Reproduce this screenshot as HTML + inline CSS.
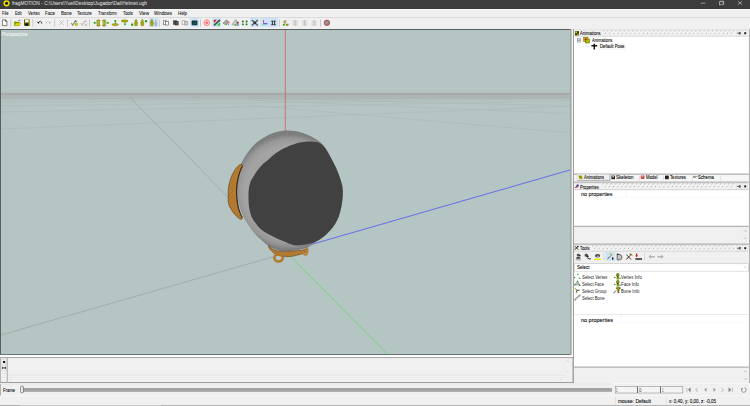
<!DOCTYPE html>
<html><head><meta charset="utf-8"><style>
*{margin:0;padding:0;box-sizing:border-box}
html,body{width:750px;height:406px;overflow:hidden;background:#f0f0f0;font-family:"Liberation Sans",sans-serif;position:relative}
.a{position:absolute}
.t{position:absolute;white-space:nowrap;transform-origin:0 0;-webkit-text-stroke:0.08px currentColor}
svg{position:absolute;overflow:visible}
</style></head><body>
<div class="a" style="left:0px;top:0px;width:750px;height:8.8px;background:#3c3c3c;"></div>
<svg style="left:0;top:0" width="20" height="8"><circle cx="6.55" cy="3.3" r="3.1" fill="#f0e000"/><circle cx="6.55" cy="3.2" r="1.55" fill="#111"/></svg>
<div class="t" style="left:12.00px;top:1.10px;font-size:5.0px;line-height:5.0px;color:#d6d6d6;transform:scaleX(0.974);">fragMOTION - C:\Users\Yuei\Desktop\Jugador\Dai\Helmet.ugh</div>
<svg style="left:0;top:0" width="750" height="9"><line x1="700.8" y1="3.2" x2="705.2" y2="3.2" stroke="#d4d4d4" stroke-width="0.6"/><rect x="719.4" y="1.8" width="3.8" height="3" fill="none" stroke="#d4d4d4" stroke-width="0.6"/><path d="M720.2,1.2 h3.6 v2.8" fill="none" stroke="#d4d4d4" stroke-width="0.5"/><path d="M737.8,1.2 L742.2,4.8 M742.2,1.2 L737.8,4.8" stroke="#d4d4d4" stroke-width="0.6"/></svg>
<div class="a" style="left:0px;top:8.8px;width:750px;height:8.2px;background:#f0f0f0;"></div>
<div class="a" style="left:0px;top:8.8px;width:750px;height:1.4px;background:#f8f8f8;"></div>
<div class="t" style="left:2.00px;top:11.34px;font-size:5.4px;line-height:5.4px;color:#1a1a1a;transform:scaleX(0.747);">File</div>
<div class="t" style="left:14.70px;top:11.34px;font-size:5.4px;line-height:5.4px;color:#1a1a1a;transform:scaleX(0.709);">Edit</div>
<div class="t" style="left:27.50px;top:11.34px;font-size:5.4px;line-height:5.4px;color:#1a1a1a;transform:scaleX(0.784);">Vertex</div>
<div class="t" style="left:45.30px;top:11.34px;font-size:5.4px;line-height:5.4px;color:#1a1a1a;transform:scaleX(0.825);">Face</div>
<div class="t" style="left:60.80px;top:11.34px;font-size:5.4px;line-height:5.4px;color:#1a1a1a;transform:scaleX(0.848);">Bone</div>
<div class="t" style="left:77.30px;top:11.34px;font-size:5.4px;line-height:5.4px;color:#1a1a1a;transform:scaleX(0.830);">Texture</div>
<div class="t" style="left:98.00px;top:11.34px;font-size:5.4px;line-height:5.4px;color:#1a1a1a;transform:scaleX(0.770);">Transform</div>
<div class="t" style="left:123.00px;top:11.34px;font-size:5.4px;line-height:5.4px;color:#1a1a1a;transform:scaleX(0.793);">Tools</div>
<div class="t" style="left:139.00px;top:11.34px;font-size:5.4px;line-height:5.4px;color:#1a1a1a;transform:scaleX(0.862);">View</div>
<div class="t" style="left:154.00px;top:11.34px;font-size:5.4px;line-height:5.4px;color:#1a1a1a;transform:scaleX(0.822);">Windows</div>
<div class="t" style="left:178.00px;top:11.34px;font-size:5.4px;line-height:5.4px;color:#1a1a1a;transform:scaleX(0.810);">Help</div>
<div class="a" style="left:0px;top:17px;width:750px;height:12px;background:#f0f0f0;"></div>
<div class="a" style="left:0px;top:17px;width:750px;height:0.9px;background:#dadada;"></div>
<div class="a" style="left:148.8px;top:18.2px;width:9.3px;height:8.4px;background:#cce4f7;"></div>
<div class="a" style="left:190px;top:18.2px;width:9.3px;height:8.4px;background:#cce4f7;"></div>
<div class="a" style="left:212.2px;top:18.2px;width:9.3px;height:8.4px;background:#cce4f7;"></div>
<div class="a" style="left:250px;top:18.2px;width:9.3px;height:8.4px;background:#cce4f7;"></div>
<div class="a" style="left:259.8px;top:18.2px;width:8.2px;height:8.4px;background:#cce4f7;"></div>
<div class="a" style="left:268.3px;top:18.2px;width:9.6px;height:8.4px;background:#cce4f7;"></div>
<svg style="left:0;top:0" width="750" height="30"><rect x="10.4" y="19.4" width="0.9" height="7.2" fill="#c4c4c4"/><rect x="32.300000000000004" y="19.4" width="0.9" height="7.2" fill="#c4c4c4"/><rect x="54.2" y="19.4" width="0.9" height="7.2" fill="#c4c4c4"/><rect x="67.1" y="19.4" width="0.9" height="7.2" fill="#c4c4c4"/><rect x="89.0" y="19.4" width="0.9" height="7.2" fill="#c4c4c4"/><rect x="158.9" y="19.4" width="0.9" height="7.2" fill="#c4c4c4"/><rect x="200.1" y="19.4" width="0.9" height="7.2" fill="#c4c4c4"/><rect x="279.0" y="19.4" width="0.9" height="7.2" fill="#c4c4c4"/><rect x="320.0" y="19.4" width="0.9" height="7.2" fill="#c4c4c4"/><path d="M2.4,19.8 h3 l1.5,1.5 v4.3 h-4.5z" fill="#fff" stroke="#333" stroke-width="0.6"/><path d="M5.4,19.8 v1.5 h1.5" fill="#333" stroke="#333" stroke-width="0.5"/><path d="M14.2,21.5 h2 l0.6,0.6 h2.5 v3.4 h-5.1z" fill="#8a8a00"/><path d="M14.4,25.6 l1.3,-2.6 h5 l-1.3,2.6z" fill="#e0e000" stroke="#666600" stroke-width="0.3"/><path d="M18.2,21 q1.2,-1.2 2.2,0" fill="none" stroke="#222" stroke-width="0.6"/><rect x="24" y="19.5" width="5.7" height="6.3" fill="#5a5a10"/><rect x="25" y="19.8" width="3.7" height="2.6" fill="#f4f4f4"/><rect x="25.2" y="23.5" width="3.4" height="2.2" fill="#111"/><rect x="28.4" y="19.5" width="1.3" height="6.3" fill="#c8c800" opacity="0.6"/><path d="M36.9,21.8 l2.3,0.2 l-0.2,2 z" fill="#111"/><path d="M38.6,22.4 q0.8,-1.2 2,-1 q1.1,0.3 1.2,2.2" fill="none" stroke="#222" stroke-width="0.9"/><path d="M51.2,22 l-2.2,0.3 l0.4,2 z" fill="#b0b0b0"/><path d="M49.4,22.4 q-0.8,-1.2 -2,-1 q-1.1,0.3 -1.1,2.2" fill="none" stroke="#c4c4c4" stroke-width="0.8"/><path d="M59.3,20.2 l4.4,4.8 M63.7,20.2 l-4.4,4.8" stroke="#b8b8b8" stroke-width="0.8"/><path d="M71.2,23 l1.5,2.2 l2.4,-4.2" fill="none" stroke="#8a8a8a" stroke-width="1.1"/><circle cx="75.8" cy="21.2" r="0.9" fill="#555"/><rect x="75" y="23" width="2.6" height="2.6" fill="#d4d400" stroke="#707000" stroke-width="0.3"/><path d="M80.8,23 l1.5,2.2 l2.4,-4.2" fill="none" stroke="#c4c4c4" stroke-width="1.2"/><circle cx="85.4" cy="21.2" r="0.9" fill="#b4b4b4"/><path d="M84.6,23.6 l2.4,2.4 M87,23.6 l-2.4,2.4" stroke="#b0b0b0" stroke-width="0.8"/><path d="M96.7,20.4 q1.6,-1.2 3.2,0 l-0.6,1.4 v2.4 l0.6,1.4 q-1.6,1.2 -3.2,0 l0.6,-1.4 v-2.4z" fill="#b0b000" stroke="#4a4a00" stroke-width="0.5"/><path d="M98.0,20.6 v4.6" stroke="#e8e840" stroke-width="0.6"/><path d="M93.3,22.8 l1.8,-1.4 v2.8z" fill="#10a010"/><rect x="94.8" y="22.4" width="2" height="0.9" fill="#10a010"/><path d="M102.5,20.4 q1.6,-1.2 3.2,0 l-0.6,1.4 v2.4 l0.6,1.4 q-1.6,1.2 -3.2,0 l0.6,-1.4 v-2.4z" fill="#b0b000" stroke="#4a4a00" stroke-width="0.5"/><path d="M103.8,20.6 v4.6" stroke="#e8e840" stroke-width="0.6"/><path d="M109.3,22.8 l-1.8,-1.4 v2.8z" fill="#10a010"/><rect x="105.8" y="22.4" width="2" height="0.9" fill="#10a010"/><ellipse cx="115.2" cy="24.6" rx="3.3" ry="1.1" fill="#b0b000" stroke="#4a4a00" stroke-width="0.3"/><circle cx="115.3" cy="21" r="1.1" fill="#10a010"/><rect x="115" y="21.8" width="0.6" height="2" fill="#10a010"/><ellipse cx="124.6" cy="21" rx="3.4" ry="1.2" fill="#b0b000" stroke="#4a4a00" stroke-width="0.3"/><path d="M125,25.8 l-1.2,-2 h2.4z" fill="#10a010"/><rect x="124.7" y="22" width="0.6" height="2" fill="#10a010"/><rect x="131.1" y="23.6" width="2.1" height="2.1" fill="#10a010"/><ellipse cx="136" cy="20.700000000000003" rx="1.088" ry="1.1" fill="#b0b000" stroke="#4a4a00" stroke-width="0.3"/><path d="M134.3,22.0 h3.4 l-0.5,3.6999999999999997 h-2.4 z" fill="#b0b000" stroke="#4a4a00" stroke-width="0.3"/><ellipse cx="142.3" cy="20.700000000000003" rx="1.088" ry="1.1" fill="#b0b000" stroke="#4a4a00" stroke-width="0.3"/><path d="M140.60000000000002,22.0 h3.4 l-0.5,3.6999999999999997 h-2.4 z" fill="#b0b000" stroke="#4a4a00" stroke-width="0.3"/><rect x="144.9" y="20.3" width="2.3" height="1.9" fill="#10a010"/><ellipse cx="151.8" cy="20.700000000000003" rx="1.088" ry="1.1" fill="#b0b000" stroke="#4a4a00" stroke-width="0.3"/><path d="M150.10000000000002,22.0 h3.4 l-0.5,3.6999999999999997 h-2.4 z" fill="#b0b000" stroke="#4a4a00" stroke-width="0.3"/><path d="M155.8,19.8 v3 M155,22.8 h1.8 v2.6 h-1.8z" fill="none" stroke="#7a8a9a" stroke-width="0.6"/><rect x="163.4" y="20.8" width="3.2" height="3.6" fill="#fff" stroke="#555" stroke-width="0.6"/><rect x="165.4" y="21.6" width="3" height="3.4" fill="#fff" stroke="#555" stroke-width="0.6"/><rect x="173.6" y="20.8" width="3.2" height="3.6" fill="#444" stroke="#333" stroke-width="0.6"/><rect x="175.4" y="21.6" width="2.8" height="3.4" fill="#555" stroke="#333" stroke-width="0.6"/><rect x="182" y="20.8" width="3.2" height="3.6" fill="#eee" stroke="#999" stroke-width="0.6"/><rect x="184.6" y="21.6" width="3.2" height="3.4" fill="#ccc" stroke="#999" stroke-width="0.6"/><rect x="191.9" y="20.7" width="5.3" height="4.4" rx="0.5" fill="#153850" stroke="#222" stroke-width="0.4"/><path d="M192.8,24.6 l1.5,-1.5 M194.8,24.2 l1.6,-2.2" stroke="#10a040" stroke-width="0.6"/><circle cx="206.8" cy="22.7" r="2.9" fill="none" stroke="#ff6a6a" stroke-width="0.8"/><circle cx="206.8" cy="22.7" r="1.3" fill="#ff5050"/><path d="M206.8,19.4 v6.6 M203.5,22.7 h6.6" stroke="#ff8080" stroke-width="0.5"/><path d="M213.8,19.8 h3.2 l-3.2,3.2z" fill="#e01010"/><path d="M220,25.4 h-3.2 l3.2,-3.2z" fill="#10d020"/><path d="M214,25.4 l6,-5.6" stroke="#3a3a3a" stroke-width="1.8"/><path d="M214,25.4 l6,-5.6" stroke="#ddd" stroke-width="0.5" stroke-dasharray="0.7 0.7"/><path d="M222.8,23.2 l3.5,-3.4 l2.2,1.5 l-3,3.5z" fill="#aaa" stroke="#555" stroke-width="0.4"/><rect x="227.4" y="21.8" width="2.2" height="1.5" fill="#f06060"/><rect x="225.6" y="23.6" width="1.6" height="1.6" fill="#40d040"/><path d="M227.4,23.6 l1.6,1.6" stroke="#2020e0" stroke-width="0.7"/><path d="M231.8,24.8 l3.2,-4.8 l1.8,0 l0,4.8z" fill="#ccc" stroke="#666" stroke-width="0.4"/><rect x="237" y="21.8" width="1.6" height="1.8" fill="#702020"/><circle cx="235.5" cy="25.3" r="0.8" fill="#10b010"/><rect x="237" y="24.6" width="2" height="0.8" fill="#202080"/><circle cx="242.9" cy="21.5" r="0.9" fill="#109010" stroke="#355" stroke-width="0.2"/><circle cx="242.9" cy="24.3" r="0.9" fill="#109010" stroke="#355" stroke-width="0.2"/><circle cx="246.6" cy="21.5" r="0.9" fill="#109010" stroke="#355" stroke-width="0.2"/><circle cx="246.6" cy="24.3" r="0.9" fill="#109010" stroke="#355" stroke-width="0.2"/><path d="M251.8,20 l6,5.6 M257.8,20 l-6,5.6" stroke="#555" stroke-width="1.3"/><circle cx="254.8" cy="22.8" r="1.4" fill="#333"/><path d="M263.6,20 v3.8" stroke="#f03030" stroke-width="0.9"/><path d="M263.6,23.8 h3.8" stroke="#2020f0" stroke-width="0.9"/><path d="M263.6,23.8 l-1.6,1.6" stroke="#20e020" stroke-width="0.9"/><path d="M271,21.2 h5 M271,24.6 h5" stroke="#444" stroke-width="0.8"/><path d="M272.4,20.8 v4.4 M274.6,20.8 v4.4" stroke="#333" stroke-width="1"/><path d="M283.5,22 l1.6,-1.8 v3.6z" fill="#b0b000" stroke="#4a4a00" stroke-width="0.3"/><rect x="285.6" y="20" width="0.6" height="2.6" fill="#888"/><circle cx="283.8" cy="24.8" r="1" fill="#10a010"/><path d="M286,24 h2.6 l-0.8,1.6 h-1.8z" fill="#b0b000" stroke="#4a4a00" stroke-width="0.3"/><path d="M292.4,21.2 h5.4 M292.4,23 h5.4 M292.4,24.8 h5.4" stroke="#c0c0c0" stroke-width="0.7"/><path d="M295,20 v6" stroke="#b0b0b0" stroke-width="0.7"/><path d="M302.0,21.2 h5.4 M302.0,23 h5.4 M302.0,24.8 h5.4" stroke="#c0c0c0" stroke-width="0.7"/><path d="M304.6,20 v6" stroke="#b0b0b0" stroke-width="0.7"/><path d="M311.59999999999997,21.2 h5.4 M311.59999999999997,23 h5.4 M311.59999999999997,24.8 h5.4" stroke="#c0c0c0" stroke-width="0.7"/><path d="M314.2,20 v6" stroke="#b0b0b0" stroke-width="0.7"/><circle cx="326.9" cy="22.8" r="2.7" fill="#8a8a8a" stroke="#c03030" stroke-width="0.8"/><path d="M325.6,24 l2.6,-2.6" stroke="#ccc" stroke-width="0.5"/></svg>
<div class="a" style="left:0px;top:29px;width:571px;height:326px;background:#b5c5c4;"></div>
<svg style="left:0;top:0" width="572" height="356"><rect x="1" y="92.8" width="570" height="2.8" fill="#a7a9a9"/><rect x="1" y="95.6" width="570" height="1.8" fill="#aeb3b3"/><rect x="1" y="97.8" width="570" height="0.7" fill="#a2acac"/><line x1="1" y1="100.2" x2="571" y2="96.71" stroke="#a9b4b3" stroke-width="0.5"/><line x1="1" y1="102.4" x2="571" y2="97.43" stroke="#a9b4b3" stroke-width="0.5"/><line x1="1" y1="106" x2="571" y2="98.61" stroke="#a9b4b3" stroke-width="0.5"/><line x1="1" y1="112" x2="571" y2="100.58" stroke="#a9b4b3" stroke-width="0.5"/><line x1="1" y1="129" x2="571" y2="106.16" stroke="#a9b4b3" stroke-width="0.5"/><line x1="250" y1="98.01" x2="571" y2="106" stroke="#a9b4b3" stroke-width="0.5"/><line x1="250" y1="100.09" x2="571" y2="113.6" stroke="#a9b4b3" stroke-width="0.5"/><line x1="250" y1="105.38" x2="571" y2="132.9" stroke="#a9b4b3" stroke-width="0.5"/><line x1="129.7" y1="97" x2="284.7" y2="255" stroke="#979c9c" stroke-width="0.55"/><line x1="1" y1="335" x2="280" y2="254.8" stroke="#979b9b" stroke-width="0.6"/><line x1="285.3" y1="30" x2="285.3" y2="140" stroke="#e05050" stroke-width="0.75"/><line x1="300" y1="247.7" x2="571" y2="169.7" stroke="#5058f0" stroke-width="0.8"/><line x1="289.3" y1="255" x2="387.8" y2="354.5" stroke="#64dc6c" stroke-width="0.85"/><defs><radialGradient id="rim" gradientUnits="userSpaceOnUse" cx="291" cy="192" r="58"><stop offset="0" stop-color="#989898"/><stop offset="0.8" stop-color="#a2a2a2"/><stop offset="0.92" stop-color="#959595"/><stop offset="1" stop-color="#7a7a7a"/></radialGradient><linearGradient id="shade" x1="0" y1="0" x2="1" y2="1"><stop offset="0" stop-color="#fff" stop-opacity="0.04"/><stop offset="0.55" stop-color="#fff" stop-opacity="0"/><stop offset="1" stop-color="#000" stop-opacity="0.15"/></linearGradient><pattern id="mesh" width="2.8" height="2.8" patternUnits="userSpaceOnUse" patternTransform="rotate(35)"><path d="M0,0 h2.8 M0,0 v2.8" stroke="#4a2a06" stroke-width="0.3" opacity="0.75"/></pattern></defs><path d="M286.0,130.6 C290.8,130.4 296.5,131.2 301.0,132.4 C305.5,133.6 309.3,135.3 313.0,137.5 C316.7,139.7 320.1,141.4 323.4,145.5 C326.7,149.6 330.3,156.7 333.0,161.8 C335.7,166.9 337.8,171.5 339.4,176.2 C341.0,180.9 342.5,184.6 342.8,190.0 C343.1,195.4 342.2,202.9 341.0,208.5 C339.8,214.1 338.0,219.0 335.5,223.3 C333.0,227.6 329.6,231.2 326.2,234.4 C322.8,237.6 318.2,240.3 315.0,242.5 C311.8,244.7 310.5,246.2 307.0,247.6 C303.5,248.9 298.5,250.0 294.0,250.6 C289.5,251.2 284.1,251.7 280.0,251.0 C275.9,250.3 272.5,248.2 269.5,246.5 C266.5,244.8 264.5,242.7 262.0,240.5 C259.5,238.3 257.4,236.8 254.5,233.2 C251.6,229.6 247.2,224.0 244.5,219.0 C241.8,214.0 239.8,208.2 238.5,203.0 C237.2,197.8 236.6,193.2 236.6,188.0 C236.6,182.8 237.2,176.7 238.3,172.0 C239.4,167.3 240.9,164.0 243.0,160.0 C245.1,156.0 248.2,151.5 251.0,148.2 C253.8,144.9 256.5,142.4 260.0,140.0 C263.5,137.6 267.7,135.1 272.0,133.5 C276.3,131.9 281.2,130.8 286.0,130.6 Z" fill="url(#rim)"/><path d="M286.0,130.6 C290.8,130.4 296.5,131.2 301.0,132.4 C305.5,133.6 309.3,135.3 313.0,137.5 C316.7,139.7 320.1,141.4 323.4,145.5 C326.7,149.6 330.3,156.7 333.0,161.8 C335.7,166.9 337.8,171.5 339.4,176.2 C341.0,180.9 342.5,184.6 342.8,190.0 C343.1,195.4 342.2,202.9 341.0,208.5 C339.8,214.1 338.0,219.0 335.5,223.3 C333.0,227.6 329.6,231.2 326.2,234.4 C322.8,237.6 318.2,240.3 315.0,242.5 C311.8,244.7 310.5,246.2 307.0,247.6 C303.5,248.9 298.5,250.0 294.0,250.6 C289.5,251.2 284.1,251.7 280.0,251.0 C275.9,250.3 272.5,248.2 269.5,246.5 C266.5,244.8 264.5,242.7 262.0,240.5 C259.5,238.3 257.4,236.8 254.5,233.2 C251.6,229.6 247.2,224.0 244.5,219.0 C241.8,214.0 239.8,208.2 238.5,203.0 C237.2,197.8 236.6,193.2 236.6,188.0 C236.6,182.8 237.2,176.7 238.3,172.0 C239.4,167.3 240.9,164.0 243.0,160.0 C245.1,156.0 248.2,151.5 251.0,148.2 C253.8,144.9 256.5,142.4 260.0,140.0 C263.5,137.6 267.7,135.1 272.0,133.5 C276.3,131.9 281.2,130.8 286.0,130.6 Z" fill="url(#shade)"/><path d="M300.0,142.6 C304.5,141.7 309.9,141.3 313.8,141.8 C317.7,142.3 320.2,142.5 323.4,145.8 C326.6,149.1 330.3,156.7 333.0,161.8 C335.7,166.9 337.8,171.5 339.4,176.2 C341.0,180.9 342.5,184.6 342.8,190.0 C343.1,195.4 342.2,202.9 341.0,208.5 C339.8,214.1 338.0,219.0 335.5,223.3 C333.0,227.6 329.9,231.2 326.2,234.4 C322.5,237.6 317.9,240.8 313.3,242.7 C308.7,244.5 302.2,245.2 298.5,245.5 C294.8,245.8 295.3,245.6 291.3,244.2 C287.3,242.8 279.5,239.6 274.6,237.2 C269.7,234.8 265.4,233.0 261.8,230.0 C258.2,227.0 254.9,222.7 252.8,219.2 C250.7,215.7 250.1,212.5 249.4,209.0 C248.7,205.5 248.6,201.2 248.5,198.0 C248.4,194.8 248.5,192.3 248.8,189.6 C249.1,186.9 249.8,184.1 250.5,182.0 C251.2,179.9 251.9,179.1 253.0,177.3 C254.1,175.5 255.5,173.1 257.0,171.0 C258.5,168.9 260.1,166.9 262.0,165.0 C263.9,163.1 266.2,161.6 268.5,159.6 C270.8,157.6 272.9,155.1 276.0,153.0 C279.1,150.9 283.0,148.7 287.0,147.0 C291.0,145.3 295.5,143.5 300.0,142.6 Z" fill="#414141"/><path d="M285,244 C292,246 300,246.5 310,243.5" fill="none" stroke="#7a8fa0" stroke-width="0.6" opacity="0.7"/><path d="M241.5,164.4 C240.9,164.3 239.6,164.6 238.6,165.4 C237.6,166.2 236.5,167.5 235.5,169.0 C234.5,170.5 233.4,172.1 232.4,174.3 C231.4,176.5 230.3,179.3 229.6,182.0 C228.9,184.7 228.4,187.2 228.2,190.5 C228.0,193.8 228.0,199.2 228.3,201.9 C228.6,204.7 229.1,205.4 229.8,207.0 C230.5,208.6 231.6,210.2 232.6,211.7 C233.6,213.2 234.8,214.6 236.0,215.8 C237.2,217.0 238.8,218.6 239.9,219.0 C241.0,219.4 242.4,219.4 242.3,218.2 C242.2,217.0 240.3,214.4 239.5,212.0 C238.7,209.6 237.9,207.1 237.4,203.5 C236.9,199.9 236.4,194.8 236.6,190.5 C236.8,186.2 237.4,181.6 238.3,177.5 C239.2,173.4 241.8,168.3 242.3,166.1 C242.8,163.9 242.1,164.5 241.5,164.4 Z" fill="#bb7f34"/><path d="M241.5,164.4 C240.9,164.3 239.6,164.6 238.6,165.4 C237.6,166.2 236.5,167.5 235.5,169.0 C234.5,170.5 233.4,172.1 232.4,174.3 C231.4,176.5 230.3,179.3 229.6,182.0 C228.9,184.7 228.4,187.2 228.2,190.5 C228.0,193.8 228.0,199.2 228.3,201.9 C228.6,204.7 229.1,205.4 229.8,207.0 C230.5,208.6 231.6,210.2 232.6,211.7 C233.6,213.2 234.8,214.6 236.0,215.8 C237.2,217.0 238.8,218.6 239.9,219.0 C241.0,219.4 242.4,219.4 242.3,218.2 C242.2,217.0 240.3,214.4 239.5,212.0 C238.7,209.6 237.9,207.1 237.4,203.5 C236.9,199.9 236.4,194.8 236.6,190.5 C236.8,186.2 237.4,181.6 238.3,177.5 C239.2,173.4 241.8,168.3 242.3,166.1 C242.8,163.9 242.1,164.5 241.5,164.4 Z" fill="url(#mesh)" stroke="#4a3010" stroke-width="0.5"/><path d="M242.3,166.1 C239,172 236.6,183 236.6,190.5 C236.6,200 238,210 242.3,217.5" fill="none" stroke="#2a1a08" stroke-width="0.9"/><path d="M268.6,246.0 C269.2,246.0 272.1,248.9 274.0,249.8 C275.9,250.7 276.8,251.2 280.0,251.4 C283.2,251.6 289.1,251.3 293.0,251.0 C296.9,250.7 301.2,250.3 303.6,249.8 C306.0,249.3 306.5,247.7 307.2,247.8 C307.9,247.9 308.2,249.5 307.6,250.4 C307.0,251.3 305.9,252.3 303.6,253.2 C301.3,254.1 297.1,255.4 294.0,256.0 C290.9,256.6 288.0,256.9 285.0,256.6 C282.0,256.3 278.4,255.5 276.0,254.4 C273.6,253.3 271.7,251.4 270.5,250.0 C269.3,248.6 268.0,246.0 268.6,246.0 Z" fill="#bb7f34"/><path d="M268.6,246.0 C269.2,246.0 272.1,248.9 274.0,249.8 C275.9,250.7 276.8,251.2 280.0,251.4 C283.2,251.6 289.1,251.3 293.0,251.0 C296.9,250.7 301.2,250.3 303.6,249.8 C306.0,249.3 306.5,247.7 307.2,247.8 C307.9,247.9 308.2,249.5 307.6,250.4 C307.0,251.3 305.9,252.3 303.6,253.2 C301.3,254.1 297.1,255.4 294.0,256.0 C290.9,256.6 288.0,256.9 285.0,256.6 C282.0,256.3 278.4,255.5 276.0,254.4 C273.6,253.3 271.7,251.4 270.5,250.0 C269.3,248.6 268.0,246.0 268.6,246.0 Z" fill="url(#mesh)" stroke="#4a3010" stroke-width="0.45"/><ellipse cx="278.6" cy="257.8" rx="4.2" ry="3.7" fill="none" stroke="#bb7f34" stroke-width="2.6"/><ellipse cx="278.6" cy="257.8" rx="4.2" ry="3.7" fill="none" stroke="url(#mesh)" stroke-width="2.6"/><path d="M303.2,250.8 C302.6,253.5 304,255 305.8,254.8 C307.4,254.4 307.8,251 307,248" fill="none" stroke="#bb7f34" stroke-width="2"/></svg>
<div class="a" style="left:0;top:29px;width:571px;height:326px;border:1px solid #5a5f5f;border-right-color:#a0aaaa;border-bottom-color:#687474"></div>
<div class="t" style="left:2.10px;top:31.62px;font-size:5.6px;line-height:5.6px;color:#f2f6f6;transform:scaleX(0.882);">Perspective</div>
<div class="a" style="left:571px;top:29px;width:179px;height:354px;background:#f0f0f0;"></div>
<div class="a" style="left:571px;top:29px;width:1px;height:326px;background:#c4c4c4;"></div>
<div class="a" style="left:573px;top:29px;width:1px;height:354px;background:#a0a0a0;"></div>
<div class="a" style="left:748.6px;top:29px;width:1.4px;height:354px;background:#b0b0b0;"></div>
<svg style="left:0;top:0" width="750" height="406"><defs><pattern id="hat" x="0" y="0" width="4.2" height="6" patternUnits="userSpaceOnUse"><path d="M0.2,1.4 l1.1,-1.1" stroke="#8a8a8a" stroke-width="0.7"/><path d="M2.3,4.2 l1.1,-1.1" stroke="#8a8a8a" stroke-width="0.7"/></pattern></defs><rect x="574" y="29.6" width="174.6" height="7" fill="#f2f2f2"/><rect x="574" y="29.6" width="174.6" height="0.6" fill="#d8d8d8"/><rect x="574" y="35.800000000000004" width="174.6" height="0.8" fill="#d0d0d0"/><g transform="translate(602.7,29.8)"><rect x="0" y="0" width="131.69999999999993" height="6" fill="url(#hat)"/></g><rect x="736.4" y="30.8" width="4.8" height="4.8" fill="#f6f6f6" stroke="#d8d8d8" stroke-width="0.4"/><path d="M737,33.2 h2.2 M739.4,31.8 v2.8" stroke="#222" stroke-width="0.7"/><rect x="739.6" y="32.0" width="1" height="2.4" fill="#444"/><rect x="742.8" y="30.8" width="4.8" height="4.8" fill="#f6f6f6" stroke="#d8d8d8" stroke-width="0.4"/><rect x="744.2" y="32.2" width="2" height="2" fill="#222"/><rect x="575" y="31.2" width="4" height="4.2" fill="#3a3a10"/><rect x="575.4" y="31.6" width="1.6" height="1.6" fill="#d0d000"/><rect x="577.2" y="33.4" width="1.4" height="1.6" fill="#b0b000"/><rect x="574" y="182.8" width="174.6" height="7" fill="#f2f2f2"/><rect x="574" y="182.8" width="174.6" height="0.6" fill="#d8d8d8"/><rect x="574" y="189.0" width="174.6" height="0.8" fill="#d0d0d0"/><g transform="translate(602.2,183.0)"><rect x="0" y="0" width="132.19999999999993" height="6" fill="url(#hat)"/></g><rect x="736.4" y="184.0" width="4.8" height="4.8" fill="#f6f6f6" stroke="#d8d8d8" stroke-width="0.4"/><path d="M737,186.4 h2.2 M739.4,185.0 v2.8" stroke="#222" stroke-width="0.7"/><rect x="739.6" y="185.20000000000002" width="1" height="2.4" fill="#444"/><rect x="742.8" y="184.0" width="4.8" height="4.8" fill="#f6f6f6" stroke="#d8d8d8" stroke-width="0.4"/><rect x="744.2" y="185.4" width="2" height="2" fill="#222"/><path d="M574.4,188 l2,-2 l1.6,1.4z" fill="#c02020"/><rect x="576.6" y="184.6" width="2" height="2" fill="#222080"/><rect x="574" y="244.6" width="174.6" height="7" fill="#f2f2f2"/><rect x="574" y="244.6" width="174.6" height="0.6" fill="#d8d8d8"/><rect x="574" y="250.79999999999998" width="174.6" height="0.8" fill="#d0d0d0"/><g transform="translate(592,244.79999999999998)"><rect x="0" y="0" width="142.39999999999998" height="6" fill="url(#hat)"/></g><rect x="736.4" y="245.79999999999998" width="4.8" height="4.8" fill="#f6f6f6" stroke="#d8d8d8" stroke-width="0.4"/><path d="M737,248.2 h2.2 M739.4,246.79999999999998 v2.8" stroke="#222" stroke-width="0.7"/><rect x="739.6" y="247.0" width="1" height="2.4" fill="#444"/><rect x="742.8" y="245.79999999999998" width="4.8" height="4.8" fill="#f6f6f6" stroke="#d8d8d8" stroke-width="0.4"/><rect x="744.2" y="247.2" width="2" height="2" fill="#222"/><path d="M574.6,249.8 l3.8,-3.8 M574.8,246.2 l3.4,3.4" stroke="#111" stroke-width="0.9"/><circle cx="577.8" cy="246.6" r="0.8" fill="#222"/><rect x="574" y="36.8" width="174.6" height="137" fill="#fff"/><rect x="574" y="173.6" width="174.6" height="1.2" fill="#a4a4a4"/><rect x="574" y="174.8" width="174.6" height="7" fill="#f6f6f6"/><rect x="574" y="181.6" width="174.6" height="1" fill="#a8a8a8"/><rect x="577" y="174.2" width="33" height="6" fill="#eeeeee" stroke="#bdbdbd" stroke-width="0.3"/><path d="M577.2,180.4 h32.8 v-6" fill="none" stroke="#909090" stroke-width="0.6"/><rect x="639.3" y="175.4" width="0.5" height="5.2" fill="#c8c8c8"/><rect x="663.5" y="175.4" width="0.5" height="5.2" fill="#c8c8c8"/><rect x="692.5" y="175.4" width="0.5" height="5.2" fill="#c8c8c8"/><rect x="720.6" y="175.4" width="0.5" height="5.2" fill="#c8c8c8"/><rect x="578.8" y="175.6" width="3.6" height="3.2" fill="#b8b800"/><path d="M579,175.8 l3,2.8" stroke="#333" stroke-width="0.7"/><rect x="611.4" y="175.6" width="3.6" height="3.6" fill="#222"/><rect x="612.4" y="176.2" width="1.6" height="1.2" fill="#eee"/><rect x="640.8" y="175.6" width="3.6" height="3.4" fill="#c04040"/><rect x="641.6" y="176.2" width="1.6" height="1.4" fill="#f0a0a0"/><rect x="665" y="175.6" width="3.8" height="3.6" fill="#222"/><path d="M693,176.4 h4.6 M693,177.4 h3" stroke="#555" stroke-width="0.6"/><rect x="574" y="190.4" width="174.6" height="35.6" fill="#fff"/><rect x="625.8" y="190.4" width="0.5" height="6.8" fill="#ececec"/><rect x="579.5" y="197.4" width="169" height="0.4" fill="#f2f2f2"/><rect x="574" y="225.8" width="174.6" height="1" fill="#a4a4a4"/><path d="M743.8,231.8 l1.5,-1.5 l1.5,1.5 M743.8,237.4 l1.5,1.5 l1.5,-1.5" fill="none" stroke="#a4a4a4" stroke-width="0.6"/><rect x="574" y="243.6" width="174.6" height="1" fill="#a4a4a4"/><rect x="605.5" y="252" width="9.5" height="8.8" fill="#cce4f7"/><rect x="603.5" y="253" width="0.6" height="7" fill="#c4c4c4"/><rect x="644.4" y="253" width="0.6" height="7" fill="#c4c4c4"/><circle cx="578.2" cy="255" r="1.5" fill="#555"/><path d="M576.2,257.6 q2,-1.6 4.2,0 v1.2 h-4.2z" fill="#444"/><path d="M575.8,259.8 h5.2" stroke="#666" stroke-width="0.6"/><circle cx="579.8" cy="255.6" r="0.9" fill="#222"/><circle cx="586.2" cy="255.2" r="1.6" fill="#555"/><circle cx="587.6" cy="256.4" r="1.1" fill="#222"/><path d="M587.4,258 q1.6,1.4 3.6,0.8" fill="none" stroke="#222" stroke-width="0.9"/><ellipse cx="597.6" cy="255.8" rx="2.6" ry="1.8" fill="#444"/><circle cx="597.9" cy="256.2" r="0.8" fill="#eee"/><rect x="594.2" y="258.6" width="6.6" height="1.5" fill="#e6e600"/><path d="M607.4,259 l4.6,-4.4" stroke="#8a8a8a" stroke-width="1"/><path d="M608,258.4 l1.2,-1.2" stroke="#b02020" stroke-width="0.9"/><circle cx="610.8" cy="254.2" r="0.9" fill="#b8b800"/><rect x="612" y="257.2" width="1.4" height="2.6" rx="0.6" fill="#222"/><path d="M617.2,254.2 v5.6 h3 q2.2,-0.6 1.6,-3.2 l-1,-1.8z" fill="#c8c8c8" stroke="#333" stroke-width="0.7"/><circle cx="617.6" cy="254.2" r="0.8" fill="#222"/><path d="M626.2,259.6 l4.8,-5 M626.4,254.6 l4.8,5" stroke="#333" stroke-width="0.9"/><path d="M627.2,258.4 l1.6,-1.6" stroke="#b02020" stroke-width="0.9"/><path d="M629.6,254 q1.8,-0.8 2.6,1.4z" fill="#8a8a00" stroke="#4a4a00" stroke-width="0.4"/><path d="M636.6,253.4 v2.4" stroke="#b01010" stroke-width="1.2"/><path d="M635.2,255.4 h2.8 l-1.4,1.8z" fill="#e00000"/><rect x="635.4" y="258.2" width="6.6" height="1.6" fill="#333"/><path d="M648.4,256.8 l2.6,-2.2 v1.4 h3.8 v1.6 h-3.8 v1.4z" fill="#b4b4b4"/><path d="M663.8,256.8 l-2.6,-2.2 v1.4 h-3.8 v1.6 h3.8 v1.4z" fill="#b4b4b4"/><rect x="574.2" y="263.8" width="174" height="7.4" fill="#fff" stroke="#b4b4b4" stroke-width="0.5"/><path d="M744.2,266.6 l1,1 l1,-1" fill="none" stroke="#777" stroke-width="0.4"/><rect x="574" y="271.6" width="174.6" height="95" fill="#fff"/><rect x="574" y="314.2" width="174.6" height="0.8" fill="#e6e6e6"/><rect x="621" y="315" width="0.5" height="7" fill="#ececec"/><rect x="579.5" y="322.6" width="169" height="0.4" fill="#f2f2f2"/><rect x="574" y="366.6" width="174.6" height="1" fill="#a4a4a4"/><path d="M743.8,372.4 l1.5,-1.5 l1.5,1.5 M743.8,378.2 l1.5,1.5 l1.5,-1.5" fill="none" stroke="#a4a4a4" stroke-width="0.6"/><rect x="577.3" y="38.3" width="3.2" height="3.8" fill="#fafafa" stroke="#7a8699" stroke-width="0.6"/><path d="M577.9,40.2 h2" stroke="#334" stroke-width="0.7"/><path d="M580.6,40.1 h2.4 M586.6,43.4 v3.4 h4" stroke="#b0b0b0" stroke-width="0.4" stroke-dasharray="0.5 0.5" fill="none"/><rect x="583.6" y="37.2" width="4.4" height="4.2" fill="#c0c000" stroke="#6a6a00" stroke-width="0.5"/><rect x="585.6" y="39" width="4" height="4" fill="#b8b800" stroke="#5a5a00" stroke-width="0.5"/><circle cx="585.6" cy="39.4" r="0.9" fill="#c00000"/><path d="M594.3,43.8 v5.8 M591.4,45.8 h5.8" stroke="#111" stroke-width="1.5"/><rect x="599" y="43.6" width="26" height="6" fill="#f8f8f8" stroke="#e8e8e8" stroke-width="0.3"/></svg>
<div class="t" style="left:580.20px;top:30.99px;font-size:5.8px;line-height:5.8px;color:#000;transform:scaleX(0.718);">Animations</div>
<div class="t" style="left:591.80px;top:38.19px;font-size:5.8px;line-height:5.8px;color:#000;transform:scaleX(0.711);">Animations</div>
<div class="t" style="left:599.80px;top:44.19px;font-size:5.8px;line-height:5.8px;color:#000;transform:scaleX(0.735);">Default Pose</div>
<div class="t" style="left:583.80px;top:175.02px;font-size:5.6px;line-height:5.6px;color:#000;transform:scaleX(0.722);">Animations</div>
<div class="t" style="left:616.20px;top:175.02px;font-size:5.6px;line-height:5.6px;color:#000;transform:scaleX(0.803);">Skeleton</div>
<div class="t" style="left:645.60px;top:175.02px;font-size:5.6px;line-height:5.6px;color:#000;transform:scaleX(0.747);">Model</div>
<div class="t" style="left:670.00px;top:175.02px;font-size:5.6px;line-height:5.6px;color:#000;transform:scaleX(0.756);">Textures</div>
<div class="t" style="left:698.00px;top:175.02px;font-size:5.6px;line-height:5.6px;color:#000;transform:scaleX(0.779);">Schema</div>
<div class="t" style="left:580.20px;top:184.59px;font-size:5.8px;line-height:5.8px;color:#000;transform:scaleX(0.711);">Properties</div>
<div class="t" style="left:581.00px;top:191.69px;font-size:5.8px;line-height:5.8px;color:#000;transform:scaleX(0.933);">no properties</div>
<div class="t" style="left:580.00px;top:245.69px;font-size:5.8px;line-height:5.8px;color:#000;transform:scaleX(0.702);">Tools</div>
<div class="t" style="left:576.60px;top:265.29px;font-size:5.8px;line-height:5.8px;color:#000;transform:scaleX(0.782);">Select</div>
<div class="t" style="left:582.00px;top:275.32px;font-size:5.6px;line-height:5.6px;color:#222;transform:scaleX(0.773);-webkit-text-stroke:0">Select Vertex</div>
<div class="t" style="left:582.00px;top:282.32px;font-size:5.6px;line-height:5.6px;color:#222;transform:scaleX(0.744);-webkit-text-stroke:0">Select Face</div>
<div class="t" style="left:582.00px;top:289.32px;font-size:5.6px;line-height:5.6px;color:#222;transform:scaleX(0.750);-webkit-text-stroke:0">Select Group</div>
<div class="t" style="left:582.00px;top:296.32px;font-size:5.6px;line-height:5.6px;color:#222;transform:scaleX(0.745);-webkit-text-stroke:0">Select Bone</div>
<div class="t" style="left:621.00px;top:275.32px;font-size:5.6px;line-height:5.6px;color:#222;transform:scaleX(0.784);-webkit-text-stroke:0">Vertex Info</div>
<div class="t" style="left:621.00px;top:282.32px;font-size:5.6px;line-height:5.6px;color:#222;transform:scaleX(0.771);-webkit-text-stroke:0">Face Info</div>
<div class="t" style="left:621.00px;top:289.32px;font-size:5.6px;line-height:5.6px;color:#222;transform:scaleX(0.772);-webkit-text-stroke:0">Bone Info</div>
<div class="t" style="left:580.70px;top:318.22px;font-size:5.6px;line-height:5.6px;color:#000;transform:scaleX(0.979);">no properties</div>
<svg style="left:0;top:0" width="750" height="406"><circle cx="577.9" cy="274.3" r="0.7" fill="#10a010"/><circle cx="574.6" cy="277.5" r="0.7" fill="#10a010"/><circle cx="579.8" cy="278.3" r="0.7" fill="#10a010"/><path d="M574.8,284.8 l2.7,-3.6 l2.4,3.9z" fill="#c8c8c8" stroke="#555" stroke-width="0.5"/><circle cx="577.5" cy="281.2" r="0.7" fill="#10a010"/><circle cx="574.6" cy="284.7" r="0.7" fill="#10a010"/><circle cx="579.9" cy="285.2" r="0.7" fill="#10a010"/><path d="M575.2,288.6 l1.8,1.8 l2.6,-0.2 M577,290.4 l-0.8,2.4" stroke="#222" stroke-width="0.8" fill="none"/><circle cx="575.2" cy="288.6" r="0.6" fill="#c8c800"/><circle cx="576.2" cy="292.8" r="0.6" fill="#c8c800"/><path d="M575.2,299.6 l4.4,-4" stroke="#777" stroke-width="1.3"/><path d="M575.2,299.6 l4.4,-4" stroke="#eee" stroke-width="0.5"/><circle cx="575" cy="299.8" r="0.8" fill="none" stroke="#666" stroke-width="0.4"/><circle cx="579.8" cy="295.4" r="0.8" fill="none" stroke="#666" stroke-width="0.4"/><ellipse cx="617.8" cy="274.90000000000003" rx="1.5" ry="1.3" fill="#b0b000" stroke="#303000" stroke-width="0.45"/><rect x="617" y="276.20000000000005" width="1.7" height="2.4" fill="#a0a000" stroke="#303000" stroke-width="0.4"/><ellipse cx="617.8" cy="278.90000000000003" rx="1.5" ry="0.6" fill="#909000"/><circle cx="614.8" cy="277.6" r="0.75" fill="#10a010"/><circle cx="620" cy="278.20000000000005" r="0.75" fill="#10a010"/><circle cx="617.8" cy="273.70000000000005" r="0.6" fill="#10a010"/><ellipse cx="617.8" cy="281.90000000000003" rx="1.5" ry="1.3" fill="#b0b000" stroke="#303000" stroke-width="0.45"/><rect x="617" y="283.20000000000005" width="1.7" height="2.4" fill="#a0a000" stroke="#303000" stroke-width="0.4"/><ellipse cx="617.8" cy="285.90000000000003" rx="1.5" ry="0.6" fill="#909000"/><circle cx="614.8" cy="284.6" r="0.75" fill="#10a010"/><circle cx="620" cy="285.20000000000005" r="0.75" fill="#10a010"/><circle cx="617.8" cy="280.70000000000005" r="0.6" fill="#10a010"/><path d="M616.6,287.6 h3.6 v1.4 h-1.2 v3.8 h-1.2 v-3.8 h-1.2z" fill="#b0b000" stroke="#303000" stroke-width="0.5"/><path d="M614,292.6 l2.4,-2.2" stroke="#777" stroke-width="1"/><circle cx="614" cy="292.6" r="0.6" fill="none" stroke="#555" stroke-width="0.4"/></svg>
<svg style="left:0;top:0" width="750" height="406"><rect x="0" y="355" width="573" height="2.2" fill="#fcfcfc"/><rect x="0" y="357.2" width="573.6" height="25" fill="#f0f0f0"/><rect x="0" y="357.2" width="573.6" height="0.9" fill="#9a9a9a"/><rect x="572.6" y="357.4" width="1" height="25.6" fill="#8a8a8a"/><rect x="0" y="382.2" width="573.6" height="0.8" fill="#8a8a8a"/><rect x="0" y="357.4" width="0.8" height="25" fill="#a8a8a8"/><rect x="1.5" y="359.2" width="4.8" height="5.2" fill="#f8f8f8" stroke="#d0d0d0" stroke-width="0.4"/><rect x="2.9" y="360.9" width="2.4" height="2.2" fill="#222"/><rect x="1.5" y="365.4" width="4.8" height="5" fill="#f8f8f8" stroke="#d0d0d0" stroke-width="0.4"/><path d="M2.2,367.9 h3.8 M2.6,366.8 v2.3 M5.4,366.8 v2.3" stroke="#222" stroke-width="0.8"/><path d="M2.2,373.4 l0.6,0.6 M4.6,373.6 l0.6,0.6 M2.2,377.2 l0.6,0.6 M4.6,377.4 l0.6,0.6" stroke="#aaa" stroke-width="0.5"/><rect x="7.6" y="374.8" width="557" height="0.6" fill="#e0e0e0"/><rect x="6.6" y="358" width="1.2" height="24.4" fill="#b4b4b4"/><rect x="0" y="383" width="0.9" height="13" fill="#a8a8a8"/><rect x="564.4" y="358" width="0.5" height="17.6" fill="#e6e6e6"/><path d="M11,378.4 l-0.9,0.9 l0.9,0.9" fill="none" stroke="#b4b4b4" stroke-width="0.4"/><path d="M566.6,361.6 l1,-1 l1,1 M566.6,371.2 l1,1 l1,-1 M560,378.4 l0.9,0.9 l-0.9,0.9" fill="none" stroke="#b0b0b0" stroke-width="0.45"/><rect x="0" y="383" width="750" height="0.8" fill="#fafafa"/><rect x="0" y="383.6" width="612" height="0.6" fill="#d8d8d8"/><rect x="21" y="388" width="591" height="3.8" fill="#a2a2a2"/><rect x="20.6" y="386.2" width="2.8" height="6.4" rx="0.6" fill="#f4f4f4" stroke="#333" stroke-width="0.5"/><rect x="615.2" y="386.6" width="67.6" height="6.4" fill="#f4f4f4" stroke="#808080" stroke-width="0.5"/><rect x="637.2" y="386.6" width="0.7" height="6.4" fill="#333"/><rect x="660.2" y="386.6" width="0.7" height="6.4" fill="#333"/><path d="M686.8,387.8 v4 M690.4,387.8 l-2.2,2 l2.2,2z" stroke="#888" stroke-width="0.5" fill="#888"/><path d="M697.6,387.8 l-1.8,2 l1.8,2" stroke="#888" stroke-width="0.6" fill="none"/><path d="M706.4,387.8 l-2,2 l2,2z" fill="#888"/><path d="M713.6,387.8 l2,2 l-2,2z" fill="#888"/><path d="M721.6,387.8 l1.8,2 l-1.8,2" stroke="#888" stroke-width="0.6" fill="none"/><path d="M732.4,387.8 v4 M728.8,387.8 l2.2,2 l-2.2,2z" stroke="#888" stroke-width="0.5" fill="#888"/><path d="M742.2,388.4 a2.4,2.2 0 1 0 3.4,0.2" fill="none" stroke="#777" stroke-width="0.7"/><path d="M741,388 l2,0 l-0.8,1.6z" fill="#777"/><path d="M744.6,387.6 l1.6,0.4 l-1.2,1z" fill="#777"/><rect x="0" y="395.6" width="750" height="0.8" fill="#fdfdfd"/><rect x="0" y="396.4" width="750" height="9.6" fill="#f0f0f0"/><rect x="615.2" y="397" width="0.5" height="8" fill="#d4d4d4"/><rect x="666.4" y="397" width="0.5" height="8" fill="#d4d4d4"/><rect x="161" y="405.2" width="589" height="0.8" fill="#a8a8a8"/><rect x="20" y="405.2" width="141" height="0.8" fill="#c0c0c0"/><rect x="0" y="405.2" width="20" height="0.8" fill="#a0a0a0"/></svg>
<div class="t" style="left:3.00px;top:388.49px;font-size:5.8px;line-height:5.8px;color:#000;transform:scaleX(0.716);">Frame</div>
<div class="t" style="left:616.40px;top:388.00px;font-size:5.0px;line-height:5.0px;color:#666;transform:scaleX(0.575);">1</div>
<div class="t" style="left:638.80px;top:388.00px;font-size:5.0px;line-height:5.0px;color:#666;transform:scaleX(0.863);">0</div>
<div class="t" style="left:661.60px;top:388.00px;font-size:5.0px;line-height:5.0px;color:#666;transform:scaleX(0.575);">1</div>
<div class="t" style="left:617.70px;top:398.99px;font-size:5.8px;line-height:5.8px;color:#000;transform:scaleX(0.846);">mouse: Default</div>
<div class="t" style="left:669.00px;top:398.99px;font-size:5.8px;line-height:5.8px;color:#000;transform:scaleX(0.775);">x: 0,40, y: 0,00, z: -0,05</div>
</body></html>
